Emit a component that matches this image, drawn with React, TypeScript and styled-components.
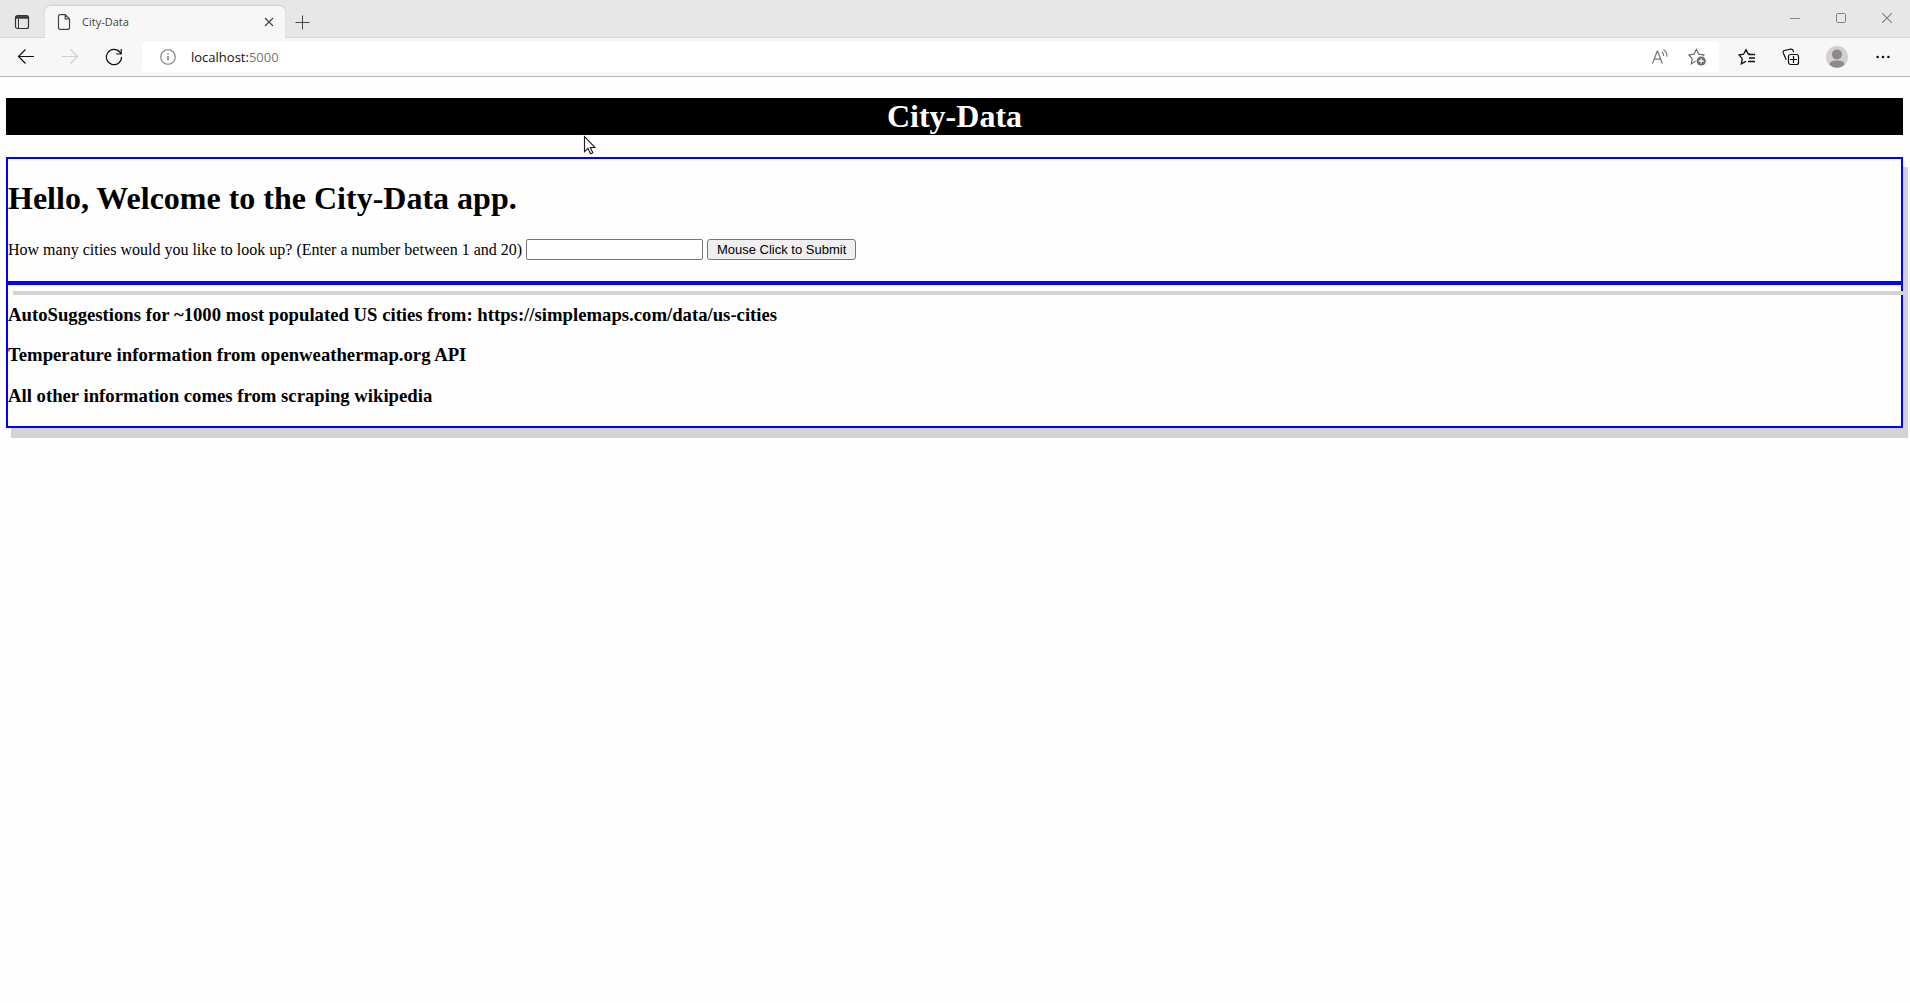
import React from "react";
import styled, { createGlobalStyle } from "styled-components";

const GlobalStyle = createGlobalStyle`
  *, *::before, *::after { box-sizing: border-box; }
  body {
    margin: 0;
    background: #fefefe;
    color: #000;
    font-family: "Liberation Serif", "Times New Roman", serif;
    font-size: 16px;
  }
`;

const Window = styled.div`
  position: relative;
  min-height: 100vh;
`;

const TitleBar = styled.header`
  display: flex;
  height: 38px;
  background: #e7e7e7;
  box-shadow: inset 0 -1px #d4d4d4;
`;

const IconButton = styled.button<{ $width?: number; $tone?: string }>`
  display: flex;
  flex: none;
  align-items: center;
  justify-content: center;
  width: ${(p) => p.$width ?? 44}px;
  padding: 0;
  border: 0;
  background: none;
  color: ${(p) => p.$tone ?? "#111"};
`;

const StripButton = styled(IconButton)`
  padding-top: 6px;
`;

const Tab = styled.div`
  display: flex;
  align-items: center;
  width: 240px;
  margin: 6px 0 0 1px;
  padding: 0 4px 0 12px;
  border-radius: 6px 6px 0 0;
  background: #f7f7f7;
  box-shadow: 0 -1px 2px #cfcfcf;
  clip-path: inset(-3px -3px 0);
  color: #444;
`;

const TabTitle = styled.span`
  flex: 1;
  padding: 0 0 2px 11px;
  font: 11px "Open Sans", "Noto Sans", sans-serif;
`;

const WindowControls = styled.div`
  display: flex;
  height: 36px;
  margin-left: auto;
`;

const Toolbar = styled.nav`
  display: flex;
  height: 39px;
  padding: 0 5px 0 4px;
  border-bottom: 1px solid #b9b9b9;
  background: #f7f7f7;
`;

const AddressBar = styled.div`
  display: flex;
  flex: 1;
  align-items: center;
  height: 30px;
  margin: 4px 6px;
  padding-left: 18px;
  border-radius: 4px;
  background: #fff;
`;

const Address = styled.div`
  flex: 1;
  padding-left: 15px;
  color: #777;
  font: 13px "Open Sans", "Noto Sans", sans-serif;
`;

const Host = styled.span`
  color: #111;
`;

const AddressButton = styled(IconButton)`
  height: 30px;
`;

const Page = styled.main`
  padding: 21px 7px 21px 6px;
`;

const Banner = styled.h1`
  margin: 0 0 22px;
  background: #000;
  color: #fff;
  font-size: 32px;
  line-height: 37px;
  text-align: center;
`;

const Panel = styled.section`
  border: 2px solid #00f;
  box-shadow: 5px 10px #d3d3d3;
  background: #fefefe;
`;

const Greeting = styled.h1`
  margin: 21px 0 22px;
  font-size: 32px;
  line-height: 37px;
`;

const CityForm = styled.form`
  display: flex;
  align-items: center;
  gap: 4px;
  margin-bottom: 21px;
`;

const CountInput = styled.input`
  width: 177px;
  height: 21px;
  border: 1px solid #767676;
  border-radius: 2px;
  background: #fff;
`;

const SubmitButton = styled.button`
  width: 149px;
  height: 21px;
  padding: 0;
  border: 1px solid #767676;
  border-radius: 3px;
  background: #efefef;
  color: #000;
  font: 13px/15px "Liberation Sans", Arial, sans-serif;
`;

const Divider = styled.hr`
  position: relative;
  height: 4px;
  margin: 0;
  border: 2px solid #00f;
  box-shadow: 5px 10px #d3d3d3;
`;

const Note = styled.h3``;

const Pointer = styled.svg`
  position: absolute;
  top: 135px;
  left: 583px;
`;

const line = { fill: "none", stroke: "currentColor", strokeWidth: 1.2 } as const;

export default function App() {
  return (
    <>
      <GlobalStyle />
      <Window>
        <TitleBar>
          <StripButton $tone="#333" aria-label="Tab actions">
            <svg width="16" height="16" viewBox="0 0 16 16" {...line}>
              <rect x="1.5" y="1.5" width="13" height="13" rx="2" />
              <path d="M2 3.4h12" strokeWidth="2.6" />
              <path d="M4.5 5v9" strokeWidth="1" />
            </svg>
          </StripButton>
          <Tab>
            <svg width="14" height="18" viewBox="0 0 14 18" {...line}>
              <path d="M3 1.6h5.2l4.3 4.3v9a1.5 1.5 0 0 1-1.5 1.5H3a1.5 1.5 0 0 1-1.5-1.5V3.1A1.5 1.5 0 0 1 3 1.6ZM8.2 1.8v4.1h4.2" />
            </svg>
            <TabTitle>City-Data</TabTitle>
            <IconButton $width={24} $tone="#444" aria-label="Close tab">
              <svg width="10" height="10" viewBox="0 0 10 10" {...line}>
                <path d="m1 1 8 8M9 1 1 9" />
              </svg>
            </IconButton>
          </Tab>
          <StripButton $width={34} $tone="#444" aria-label="New tab">
            <svg width="15" height="15" viewBox="0 0 15 15" {...line}>
              <path d="M7.5.5v14M.5 7.5h14" strokeWidth="1" />
            </svg>
          </StripButton>
          <WindowControls>
            <IconButton $width={46} $tone="#8a8a8a" aria-label="Minimize">
              <svg width="10" height="10" viewBox="0 0 10 10" {...line}>
                <path d="M0 5.5h10" strokeWidth="1" />
              </svg>
            </IconButton>
            <IconButton $width={46} $tone="#857f82" aria-label="Maximize">
              <svg width="10" height="10" viewBox="0 0 10 10" {...line}>
                <rect x=".5" y=".5" width="9" height="9" rx="1.2" strokeWidth="1" />
              </svg>
            </IconButton>
            <IconButton $width={46} $tone="#857f82" aria-label="Close">
              <svg width="10" height="10" viewBox="0 0 10 10" {...line}>
                <path d="m0 0 10 10M10 0 0 10" strokeWidth="1.1" />
              </svg>
            </IconButton>
          </WindowControls>
        </TitleBar>
        <Toolbar>
          <IconButton aria-label="Back">
            <svg width="18" height="16" viewBox="0 0 18 16" {...line}>
              <path d="M17 7.5H1.5M8.5.5l-7 7 7 7" />
            </svg>
          </IconButton>
          <IconButton $tone="#cfcfcf" aria-label="Forward">
            <svg width="18" height="16" viewBox="0 0 18 16" {...line}>
              <path d="M1 7.5h15.5M9.5.5l7 7-7 7" />
            </svg>
          </IconButton>
          <IconButton aria-label="Refresh">
            <svg width="18" height="18" viewBox="0 0 18 18" {...line}>
              <path d="M16.6 9A7.6 7.6 0 1 1 15 4.4L16.2 6M16.2 1v5h-5" />
            </svg>
          </IconButton>
          <AddressBar>
            <svg width="16" height="16" viewBox="0 0 16 16" fill="none" stroke="#777" strokeWidth="1.1">
              <circle cx="8" cy="8" r="7.3" />
              <path d="M8 7v4.5M8 4.2v1.4" strokeWidth="1.4" />
            </svg>
            <Address>
              <Host>localhost:</Host>5000
            </Address>
            <AddressButton $width={30} $tone="#777" aria-label="Read aloud">
              <svg width="18" height="18" viewBox="0 0 18 18" {...line}>
                <path d="M1.5 15.5 6.2 3.2h.4l4.7 12.3M3.1 11.2h6.6M10.8 4c1.3.8 1.9 2.2 1.8 4M12.5 1.8c2.3 1.3 3.8 3.8 3.4 7" />
              </svg>
            </AddressButton>
            <AddressButton aria-label="Add to favorites" $tone="#6d6d6d">
              <svg width="18" height="18" viewBox="0 0 18 18" {...line}>
                <path d="m7.6 13.3-4.3 2.6.9-5.3L.9 7l5-.8L8.4 1.4l2.3 4.8 5.2.8-1 1" />
                <circle cx="13.2" cy="13" r="4.6" fill="currentColor" stroke="none" />
                <path d="M13.2 10.5v5M10.7 13h5" stroke="#fff" strokeWidth="1.3" />
              </svg>
            </AddressButton>
          </AddressBar>
          <IconButton aria-label="Favorites">
            <svg width="18" height="18" viewBox="0 0 18 18" {...line}>
              <path d="m8 13.4-4.7 2.4.9-5.2L1 7l4.6-.8L8 1.6l2 4.2h2.2M10.5 6.5h6.5M11 10h6M10 13.5h7" strokeWidth="1.3" />
            </svg>
          </IconButton>
          <IconButton aria-label="Collections">
            <svg width="18" height="18" viewBox="0 0 18 18" {...line}>
              <rect x="6.5" y="6.5" width="10" height="10" rx="2" />
              <path d="M11.5 8v7M8 11.5h7M4.2 11.7 1.2 4.8c-.4-1 0-1.9 1-2.3L9 1.2c1-.2 1.8.2 2.1 1.2l.5 1.7" />
            </svg>
          </IconButton>
          <IconButton $width={48} aria-label="Profile">
            <svg width="22" height="22" viewBox="0 0 22 22">
              <circle cx="11" cy="11" r="11" fill="#d2d0ce" />
              <circle cx="11" cy="8.4" r="5" fill="#8f898d" />
              <path d="M3.5 18.8c.2-3 3-4.3 7.5-4.3s7.3 1.3 7.5 4.3a11 11 0 0 1-15 0Z" fill="#8f898d" />
            </svg>
          </IconButton>
          <IconButton aria-label="Settings and more">
            <svg width="14" height="4" viewBox="0 0 14 4" fill="currentColor">
              <circle cx="1.6" cy="2" r="1.3" />
              <circle cx="7" cy="2" r="1.3" />
              <circle cx="12.4" cy="2" r="1.3" />
            </svg>
          </IconButton>
        </Toolbar>
        <Page>
          <Banner>City-Data</Banner>
          <Panel>
            <Greeting>Hello, Welcome to the City-Data app.</Greeting>
            <CityForm onSubmit={(e) => e.preventDefault()}>
              <label htmlFor="count">
                How many cities would you like to look up? (Enter a number between 1 and 20)
              </label>
              <CountInput id="count" type="text" />
              <SubmitButton type="submit">Mouse Click to Submit</SubmitButton>
            </CityForm>
            <Divider />
            <Note>AutoSuggestions for ~1000 most populated US cities from: https://simplemaps.com/data/us-cities</Note>
            <Note>Temperature information from openweathermap.org API</Note>
            <Note>All other information comes from scraping wikipedia</Note>
          </Panel>
        </Page>
        <Pointer width="13" height="20" viewBox="0 0 13 20" aria-hidden="true">
          <path
            d="M1.5 1.5v15.2l3.5-3.3 2.5 5.3 2.3-1-2.5-5.2h4.8Z"
            fill="#fff"
            stroke="#1c1826"
            strokeWidth="1.1"
          />
        </Pointer>
      </Window>
    </>
  );
}
